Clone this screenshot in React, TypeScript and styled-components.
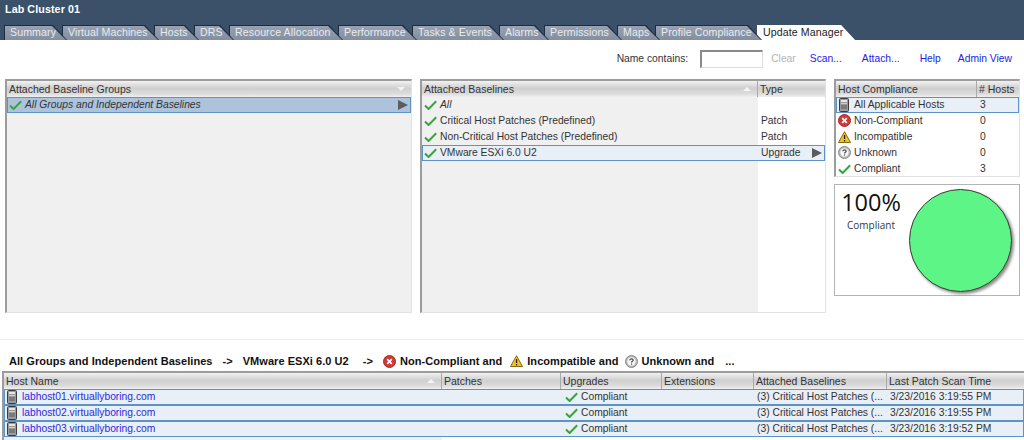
import React, { FC } from 'react'
import styled, { createGlobalStyle } from 'styled-components'

const GlobalStyle = createGlobalStyle`
  html, body {
    margin: 0;
    padding: 0;
    background: #fff;
  }
  body {
    font-family: "Liberation Sans", Arial, sans-serif;
    font-size: 10.3px;
    color: #333;
  }
  * {
    box-sizing: border-box;
  }
`

const Page = styled.div`
  width: 1024px;
  height: 440px;
  overflow: hidden;
  display: flex;
  flex-direction: column;
`

const Header = styled.div`
  height: 40px;
  background: #3b5069;
  display: flex;
  flex-direction: column;
`

const Title = styled.div`
  height: 25px;
  padding: 3px 0 0 5px;
  color: #fff;
  font-size: 10.7px;
  font-weight: bold;
  letter-spacing: 0.1px;
  line-height: 13px;
`

const TabStrip = styled.div`
  display: flex;
  height: 15px;
  padding-left: 4px;
`

const Tab = styled.div<{ $width: number; $order: number; $active?: boolean }>`
  position: relative;
  flex: none;
  width: ${({ $width }) => $width}px;
  height: 15px;
  margin-right: -5px;
  padding-left: 6px;
  line-height: 15px;
  letter-spacing: 0.1px;
  white-space: nowrap;
  font-size: 10.6px;
  color: ${({ $active }) => ($active ? '#222' : '#e8ecf0')};
  background: ${({ $active }) => ($active ? '#fff' : '#1f2c3c')};
  clip-path: polygon(0 0, calc(100% - 14px) 0, 100% 100%, 0 100%);
  z-index: ${({ $order }) => $order};

  &::before {
    content: '';
    position: absolute;
    inset: ${({ $active }) => ($active ? '0' : '1px 1px 0 1px')};
    background: ${({ $active }) => ($active ? '#fff' : 'linear-gradient(#97a1b1, #838e9f)')};
    clip-path: polygon(0 0, calc(100% - 14px) 0, 100% 100%, 0 100%);
    z-index: -1;
  }
`

const Toolbar = styled.div`
  height: 39px;
  padding: 10px 12px 0 0;
  display: flex;
  justify-content: flex-end;
  align-items: flex-start;
  line-height: 17px;
`

const FilterLabel = styled.span`
  color: #333;
  margin-right: 12px;
`

const FilterInput = styled.div`
  width: 63px;
  height: 18px;
  border: 1px solid #ddd;
  border-top: 2px solid #8a8a8a;
  border-left: 2px solid #8a8a8a;
  background: #fff;
  margin-right: 8px;
`

const ToolLink = styled.span<{ $gap: number; $disabled?: boolean }>`
  margin-right: ${({ $gap }) => $gap}px;
  color: ${({ $disabled }) => ($disabled ? '#b4b4b4' : '#2323e6')};
`

const TopRow = styled.div`
  display: grid;
  grid-template-columns: 407px 406px 186px;
  column-gap: 8px;
  height: 234px;
  padding-left: 5px;
`

const Panel = styled.div<{ $height?: number }>`
  display: flex;
  flex-direction: column;
  height: ${({ $height }) => ($height ? `${$height}px` : '100%')};
  border: 1px solid #e2e2e2;
  border-top: 2px solid #9c9c9c;
  border-left: 2px solid #9c9c9c;
  background: #fff;
`

const Stack = styled.div`
  display: flex;
  flex-direction: column;
  gap: 7px;
`

const HeaderRow = styled.div<{ $cols: string }>`
  display: grid;
  grid-template-columns: ${({ $cols }) => $cols};
  height: 16px;
  flex: none;
  background: linear-gradient(#f2f2f2, #cfcfcf 45%, #dcdcdc 80%, #f0f0f0);
`

const HeaderCell = styled.div`
  display: flex;
  align-items: center;
  padding: 0 4px 0 2px;
  color: #333;
  font-size: 10.5px;
  white-space: nowrap;
  overflow: hidden;
  border-right: 1px solid #a9a9a9;

  &:last-child {
    border-right: 0;
  }
`

const Row = styled.div<{ $cols: string; $selected?: 'strong' | 'soft'; $grow?: boolean }>`
  display: grid;
  grid-template-columns: ${({ $cols }) => $cols};
  height: ${({ $grow }) => ($grow ? 'auto' : '16px')};
  flex: ${({ $grow }) => ($grow ? '1' : 'none')};
  outline: ${({ $selected }) => ($selected ? '1px solid #5e93c6' : 'none')};
  outline-offset: -1px;
  background: ${({ $selected }) =>
    $selected === 'strong' ? '#adc3dc' : $selected === 'soft' ? '#e9eff6' : 'transparent'};
`

const Cell = styled.div<{ $tint?: boolean; $link?: boolean; $italic?: boolean }>`
  display: flex;
  align-items: center;
  gap: 3px;
  padding: 0 2px 1px 3px;
  min-width: 0;
  white-space: nowrap;
  overflow: hidden;
  background: ${({ $tint }) => ($tint ? '#f0f0f0' : 'transparent')};
  color: ${({ $link }) => ($link ? '#2b2be0' : '#333')};
  font-style: ${({ $italic }) => ($italic ? 'italic' : 'normal')};
`

const IconSlot = styled.span<{ $indent?: number }>`
  display: inline-flex;
  flex: none;
  width: 14px;
  justify-content: center;
  margin-left: ${({ $indent }) => $indent ?? -2}px;
`

const PushRight = styled.span`
  display: inline-flex;
  margin-left: auto;
  margin-right: 1px;
`

const Caret = styled.span<{ $down?: boolean }>`
  margin-left: auto;
  margin-right: 2px;
  width: 0;
  height: 0;
  border-left: 4px solid transparent;
  border-right: 4px solid transparent;
  ${({ $down }) =>
    $down ? 'border-top: 4px solid #f4f4f4;' : 'border-bottom: 4px solid #f4f4f4;'}
`

const PieBox = styled.div`
  height: 112px;
  border: 1px solid #b4b4b4;
  background: #fff;
  display: flex;
  padding: 4px 7px 0 7px;
`

const PieText = styled.div`
  width: 58px;
  margin-top: -3px;
  display: flex;
  flex-direction: column;
  align-items: center;
`

const Percent = styled.div`
  font-family: "Open Sans", sans-serif;
  font-size: 23.5px;
  line-height: 32px;
  color: #111;
`

const PercentLabel = styled.div`
  font-family: "Open Sans", sans-serif;
  font-size: 10px;
  line-height: 16px;
  margin-top: -1px;
  color: #2e3a46;
`

const PieCircle = styled.div`
  width: 103px;
  height: 103px;
  margin-left: auto;
  border-radius: 50%;
  border: 1.5px solid #3a3a3a;
  background: #5cf586;
  box-shadow: 2px 2px 3px rgba(0, 0, 0, 0.45);
`

const Divider = styled.div`
  margin-top: 26px;
  height: 1px;
  background: #ebebeb;
  flex: none;
`

const Crumbs = styled.div`
  height: 31px;
  flex: none;
  padding: 11px 0 0 9px;
  display: flex;
  align-items: center;
  font-size: 11px;
  font-weight: bold;
  color: #111;
  letter-spacing: 0.05px;
  white-space: nowrap;
`

const Crumb = styled.span<{ $gap: number }>`
  display: inline-flex;
  align-items: center;
  margin-right: ${({ $gap }) => $gap}px;
`

const CrumbIcon = styled.span`
  display: inline-flex;
  margin-right: 4px;
`

const HostTable = styled(Panel)`
  height: 69px;
  margin-left: 2px;
  flex: none;
  border-right: 0;
  border-bottom: 0;
`

const Check: FC = () => (
  <svg width="13" height="10" viewBox="0 0 13 10">
    <path d="M1 5.5 L4.6 9 L12.2 1.2" fill="none" stroke="#37a53d" strokeWidth="2" />
  </svg>
)

const Arrow: FC = () => (
  <svg width="10" height="10" viewBox="0 0 10 10">
    <polygon points="0,0 10,5 0,10" fill="#5c5c5c" />
  </svg>
)

const HostIcon: FC = () => (
  <svg width="10" height="14" viewBox="0 0 10 14">
    <rect x="0.5" y="0.5" width="9" height="13" rx="1" fill="#9a9a9a" stroke="#3c3c3c" />
    <rect x="2" y="2" width="6" height="2" fill="#e6e6e6" />
    <rect x="2" y="5" width="6" height="1" fill="#cfcfcf" />
    <rect x="2" y="7" width="6" height="4" fill="#7a7a7a" />
  </svg>
)

const ErrorIcon: FC = () => (
  <svg width="13" height="13" viewBox="0 0 13 13">
    <circle cx="6.5" cy="6.5" r="6" fill="#cf3a35" stroke="#a82b2b" />
    <path d="M4.2 4.2 L8.8 8.8 M8.8 4.2 L4.2 8.8" stroke="#fff" strokeWidth="1.7" />
  </svg>
)

const WarnIcon: FC = () => (
  <svg width="13" height="12" viewBox="0 0 13 12">
    <polygon points="6.5,0.7 12.5,11.5 0.5,11.5" fill="#f5c21f" stroke="#8a6a10" />
    <rect x="5.9" y="4" width="1.3" height="4" fill="#222" />
    <rect x="5.9" y="9" width="1.3" height="1.4" fill="#222" />
  </svg>
)

const UnknownIcon: FC = () => (
  <svg width="13" height="13" viewBox="0 0 13 13">
    <circle cx="6.5" cy="6.5" r="6" fill="#b8b8b8" stroke="#8a8a8a" />
    <circle cx="6.5" cy="6.5" r="4.2" fill="#f6f6f6" />
    <path d="M4.8 5.2 C4.8 3.4 8.2 3.4 8.2 5.2 C8.2 6.4 6.5 6.2 6.5 7.6" fill="none" stroke="#444" strokeWidth="1.1" />
    <rect x="6" y="8.5" width="1.1" height="1.2" fill="#444" />
  </svg>
)

const tabs = [
  { label: 'Summary', width: 63 },
  { label: 'Virtual Machines', width: 97 },
  { label: 'Hosts', width: 45 },
  { label: 'DRS', width: 40 },
  { label: 'Resource Allocation', width: 114 },
  { label: 'Performance', width: 79 },
  { label: 'Tasks & Events', width: 92 },
  { label: 'Alarms', width: 50 },
  { label: 'Permissions', width: 78 },
  { label: 'Maps', width: 43 },
  { label: 'Profile Compliance', width: 107 },
  { label: 'Update Manager', width: 98, active: true },
]

const baselineCols = '336px 1fr'
const complianceCols = '141px 1fr'
const hostCols = '438px 119px 101px 92px 133px 1fr'

const baselines = [
  { name: 'All', type: '', italic: true },
  { name: 'Critical Host Patches (Predefined)', type: 'Patch' },
  { name: 'Non-Critical Host Patches (Predefined)', type: 'Patch' },
]

const compliance = [
  { icon: <HostIcon />, label: 'All Applicable Hosts', count: 3, selected: true },
  { icon: <ErrorIcon />, label: 'Non-Compliant', count: 0 },
  { icon: <WarnIcon />, label: 'Incompatible', count: 0 },
  { icon: <UnknownIcon />, label: 'Unknown', count: 0 },
  { icon: <Check />, label: 'Compliant', count: 3 },
]

const hosts = [
  { name: 'labhost01.virtuallyboring.com', scanned: '3/23/2016 3:19:55 PM' },
  { name: 'labhost02.virtuallyboring.com', scanned: '3/23/2016 3:19:55 PM' },
  { name: 'labhost03.virtuallyboring.com', scanned: '3/23/2016 3:19:52 PM' },
]

const App: FC = () => {
  return (
    <Page>
      <GlobalStyle />
      <Header>
        <Title>Lab Cluster 01</Title>
        <TabStrip>
          {tabs.map((t, i) => (
            <Tab key={t.label} $width={t.width} $order={tabs.length - i} $active={t.active}>
              {t.label}
            </Tab>
          ))}
        </TabStrip>
      </Header>

      <Toolbar>
        <FilterLabel>Name contains:</FilterLabel>
        <FilterInput />
        <ToolLink $gap={14} $disabled>
          Clear
        </ToolLink>
        <ToolLink $gap={20}>Scan...</ToolLink>
        <ToolLink $gap={20}>Attach...</ToolLink>
        <ToolLink $gap={17}>Help</ToolLink>
        <ToolLink $gap={0}>Admin View</ToolLink>
      </Toolbar>

      <TopRow>
        <Panel>
          <HeaderRow $cols="1fr">
            <HeaderCell>
              Attached Baseline Groups
              <Caret $down />
            </HeaderCell>
          </HeaderRow>
          <Row $cols="1fr" $selected="strong">
            <Cell $italic>
              <IconSlot>
                <Check />
              </IconSlot>
              All Groups and Independent Baselines
              <PushRight>
                <Arrow />
              </PushRight>
            </Cell>
          </Row>
          <Row $cols="1fr" $grow>
            <Cell $tint />
          </Row>
        </Panel>

        <Panel>
          <HeaderRow $cols={baselineCols}>
            <HeaderCell>
              Attached Baselines
              <Caret />
            </HeaderCell>
            <HeaderCell>Type</HeaderCell>
          </HeaderRow>
          {baselines.map((b) => (
            <Row key={b.name} $cols={baselineCols}>
              <Cell $tint $italic={b.italic}>
                <IconSlot>
                  <Check />
                </IconSlot>
                {b.name}
              </Cell>
              <Cell>{b.type}</Cell>
            </Row>
          ))}
          <Row $cols={baselineCols} $selected="soft">
            <Cell>
              <IconSlot>
                <Check />
              </IconSlot>
              VMware ESXi 6.0 U2
            </Cell>
            <Cell>
              Upgrade
              <PushRight>
                <Arrow />
              </PushRight>
            </Cell>
          </Row>
          <Row $cols={baselineCols} $grow>
            <Cell $tint />
            <Cell />
          </Row>
        </Panel>

        <Stack>
          <Panel $height={98}>
            <HeaderRow $cols={complianceCols}>
              <HeaderCell>Host Compliance</HeaderCell>
              <HeaderCell># Hosts</HeaderCell>
            </HeaderRow>
            {compliance.map((c) => (
              <Row key={c.label} $cols={complianceCols} $selected={c.selected ? 'soft' : undefined}>
                <Cell>
                  <IconSlot>{c.icon}</IconSlot>
                  {c.label}
                </Cell>
                <Cell>{c.count}</Cell>
              </Row>
            ))}
          </Panel>
          <PieBox>
            <PieText>
              <Percent>100%</Percent>
              <PercentLabel>Compliant</PercentLabel>
            </PieText>
            <PieCircle />
          </PieBox>
        </Stack>
      </TopRow>

      <Divider />

      <Crumbs>
        <Crumb $gap={10}>All Groups and Independent Baselines</Crumb>
        <Crumb $gap={10}>-&gt;</Crumb>
        <Crumb $gap={14}>VMware ESXi 6.0 U2</Crumb>
        <Crumb $gap={10}>-&gt;</Crumb>
        <Crumb $gap={8}>
          <CrumbIcon>
            <ErrorIcon />
          </CrumbIcon>
          Non-Compliant and
        </Crumb>
        <Crumb $gap={6}>
          <CrumbIcon>
            <WarnIcon />
          </CrumbIcon>
          Incompatible and
        </Crumb>
        <Crumb $gap={11}>
          <CrumbIcon>
            <UnknownIcon />
          </CrumbIcon>
          Unknown and
        </Crumb>
        <Crumb $gap={0}>...</Crumb>
      </Crumbs>

      <HostTable>
        <HeaderRow $cols={hostCols}>
          <HeaderCell>
            Host Name
            <Caret />
          </HeaderCell>
          <HeaderCell>Patches</HeaderCell>
          <HeaderCell>Upgrades</HeaderCell>
          <HeaderCell>Extensions</HeaderCell>
          <HeaderCell>Attached Baselines</HeaderCell>
          <HeaderCell>Last Patch Scan Time</HeaderCell>
        </HeaderRow>
        {hosts.map((h) => (
          <Row key={h.name} $cols={hostCols} $selected="soft">
            <Cell $link>
              <IconSlot>
                <HostIcon />
              </IconSlot>
              {h.name}
            </Cell>
            <Cell />
            <Cell>
              <IconSlot $indent={0}>
                <Check />
              </IconSlot>
              Compliant
            </Cell>
            <Cell />
            <Cell>(3) Critical Host Patches (...</Cell>
            <Cell>{h.scanned}</Cell>
          </Row>
        ))}
        <Row $cols={hostCols} $grow>
          <Cell $tint />
        </Row>
      </HostTable>
    </Page>
  )
}

export default App
